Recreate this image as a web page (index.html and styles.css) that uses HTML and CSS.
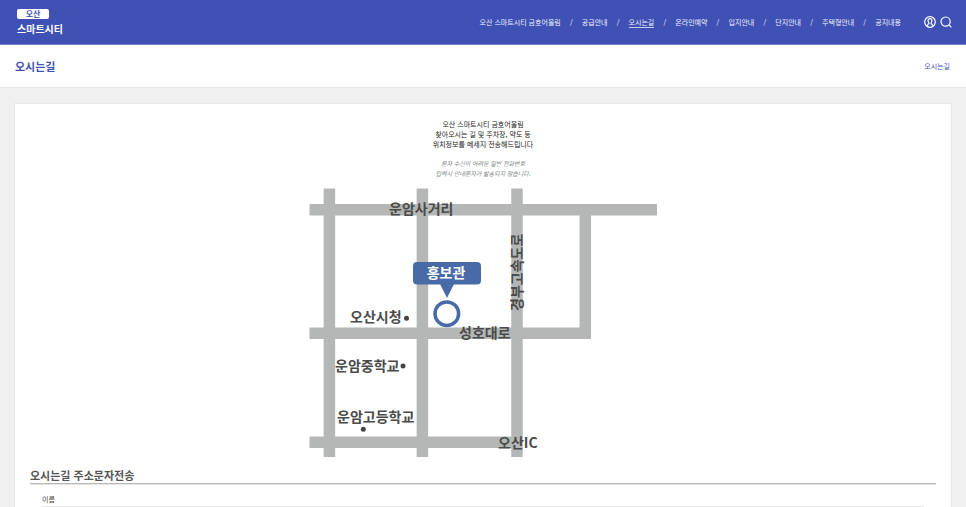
FILE: index.html
```html
<!DOCTYPE html>
<html lang="ko">
<head>
    <meta charset="UTF-8" />
    <meta name="viewport" content="width=device-width, initial-scale=1.0"/>
    <title>오시는길 | 오산 스마트시티</title>
    <link rel="stylesheet" href="styles.css">
</head>
<body>
<header class="header">
    <a href="#" class="logo">
        <span class="logo-badge">오산</span>
        <span class="logo-name">스마트시티</span>
    </a>
    <nav class="nav">
        <ul class="menu">
            <li><a href="#">오산 스마트시티 금호어울림</a></li>
            <li><a href="#">공급안내</a></li>
            <li><a href="#" class="active">오시는길</a></li>
            <li><a href="#">온라인예약</a></li>
            <li><a href="#">입지안내</a></li>
            <li><a href="#">단지안내</a></li>
            <li><a href="#">주택형안내</a></li>
            <li><a href="#">공지내용</a></li>
        </ul>
        <div class="tools">
            <button type="button" class="icon-button" aria-label="로그인">
                <svg viewBox="0 0 12 12" width="12" height="12">
                    <circle cx="6" cy="6" r="5.3"/>
                    <path d="M3.6 9.8V8.9Q3.6 8.3 4.9 7.8V6.9Q4.1 6.1 4.1 4.6Q4.1 2.6 6 2.6Q7.9 2.6 7.9 4.6Q7.9 6.1 7.1 6.9V7.8Q8.4 8.3 8.4 8.9V9.8"/>
                </svg>
            </button>
            <button type="button" class="icon-button" aria-label="검색">
                <svg viewBox="0 0 12 12" width="12" height="12">
                    <circle cx="5.6" cy="5.6" r="4.6"/>
                    <path d="M8.9 8.9L11.4 11.4"/>
                </svg>
            </button>
        </div>
    </nav>
</header>

<div class="title-bar">
    <h1>오시는길</h1>
    <a href="#" class="crumb">오시는길</a>
</div>

<main class="card">
    <div class="intro">
        <p>오산 스마트시티 금호어울림<br>찾아오시는 길 및 주차장, 약도 등<br>위치정보를 메세지 전송해드립니다</p>
        <p class="note">문자 수신이 어려운 일반 전화번호<br>입력시 안내문자가 발송되지 않습니다.</p>
    </div>

    <svg class="map" viewBox="0 0 348 270" role="img" aria-label="홍보관 약도">
        <!-- roads -->
        <g class="road">
            <path d="M0.5 21.8H348"/>
            <path d="M0.5 145.2H282"/>
            <path d="M0.5 254.2H213"/>
            <path d="M20.4 0.5V269"/>
            <path d="M113.4 0.5V269"/>
            <path d="M208 0.5V269"/>
            <path d="M276.3 22V151"/>
        </g>
        <!-- place names -->
        <g class="place">
            <text x="80" y="26">운암사거리</text>
            <text x="41" y="134">오산시청</text>
            <text x="26" y="183">운암중학교</text>
            <text x="28" y="234">운암고등학교</text>
            <text x="150" y="150">성호대로</text>
            <text x="189" y="260">오산IC</text>
            <text transform="translate(213 123) rotate(-90)">경부고속도로</text>
        </g>
        <g class="dot">
            <circle cx="97.5" cy="130.2" r="2.5"/>
            <circle cx="94" cy="178" r="2.5"/>
            <circle cx="54.3" cy="241.2" r="2.5"/>
        </g>
        <!-- showroom marker -->
        <rect class="marker" x="104" y="74" width="68" height="22.5" rx="4"/>
        <path class="marker" d="M131 96H145L138 110Z"/>
        <text class="marker-text" x="137" y="90">홍보관</text>
        <circle class="ring" cx="137.8" cy="125.7" r="11.8"/>
    </svg>

    <form class="sms-form">
        <h2>오시는길 주소문자전송</h2>
        <div class="form-group">
            <label for="name">이름</label>
            <input type="text" id="name" name="name">
        </div>
    </form>
</main>
</body>
</html>
```
FILE: styles.css
```css
* {
    margin: 0;
    padding: 0;
    box-sizing: border-box;
}

body {
    background-color: #f0f0f0;
    color: #444;
    font-family: "Noto Sans CJK KR", "Noto Sans", sans-serif;
    font-size: 7px;
    line-height: 10px;
}

a {
    color: inherit;
    text-decoration: none;
}

.header {
    display: flex;
    justify-content: space-between;
    align-items: center;
    height: 45px;
    padding: 0 14px 0 17px;
    background-color: #3f51b5;
    border-bottom: 1px solid #7482cb;
    color: #fff;
}

.logo {
    display: flex;
    flex-direction: column;
    align-items: flex-start;
    gap: 3px;
    font-weight: bold;
}

.logo-badge {
    width: 32px;
    border-radius: 2px;
    background-color: #fff;
    color: #3f51b5;
    font-size: 8px;
    text-align: center;
}

.logo-name {
    font-size: 10px;
    line-height: 13px;
}

.nav {
    display: flex;
    align-items: center;
    gap: 23px;
}

.menu {
    display: flex;
    list-style: none;
    color: #f0f2fb;
}

.menu li + li::before {
    content: "/";
    display: inline-block;
    width: 21px;
    text-align: center;
}

.menu a {
    display: inline-block;
    border-bottom: 1px solid transparent;
}

.menu .active {
    border-color: #c5cbe9;
}

.tools {
    display: flex;
    gap: 4px;
}

.icon-button {
    display: block;
    width: 12px;
    height: 12px;
    border: none;
    background: none;
    cursor: pointer;
}

.icon-button svg {
    display: block;
    fill: none;
    stroke: #fff;
    stroke-width: 1.2;
}

.title-bar {
    display: flex;
    justify-content: space-between;
    align-items: center;
    height: 43px;
    padding: 0 16px 0 15px;
    background-color: #fff;
    border-bottom: 1px solid #e5e5e5;
    color: #3f51b5;
}

h1 {
    font-size: 11px;
    font-weight: bold;
    line-height: 16px;
}

.card {
    margin: 15px 14px 0;
    padding: 15px;
    background-color: #fff;
    border: 1px solid #e8e8e8;
}

.intro {
    color: #222;
    text-align: center;
}

.note {
    margin-top: 10px;
    color: #7c8484;
    font-size: 6px;
    font-style: italic;
}

.map {
    display: block;
    width: 348px;
    max-width: 100%;
    margin: 9px auto 0;
}

.road {
    fill: none;
    stroke: #b4b7b6;
    stroke-width: 11.5;
}

.place {
    fill: #4a4a4a;
    font-size: 14px;
    font-weight: bold;
}

.dot {
    fill: #444;
}

.marker {
    fill: #486ba7;
}

.marker-text {
    fill: #fff;
    font-size: 14px;
    font-weight: bold;
    text-anchor: middle;
}

.ring {
    fill: #fff;
    stroke: #486ba7;
    stroke-width: 3.5;
}

h2 {
    margin-top: 9px;
    border-bottom: 1px solid #b8b8b8;
    box-shadow: 0 1px #e5e5e5;
    color: #555;
    font-size: 11px;
    font-weight: bold;
    line-height: 16px;
}

.form-group {
    padding: 10px 12px 0;
}

.form-group label {
    display: block;
    margin-bottom: 2px;
}

.form-group input {
    display: block;
    width: 100%;
    height: 20px;
    padding: 0 6px;
    border: 1px solid #e5e5e5;
    font: inherit;
}
```
